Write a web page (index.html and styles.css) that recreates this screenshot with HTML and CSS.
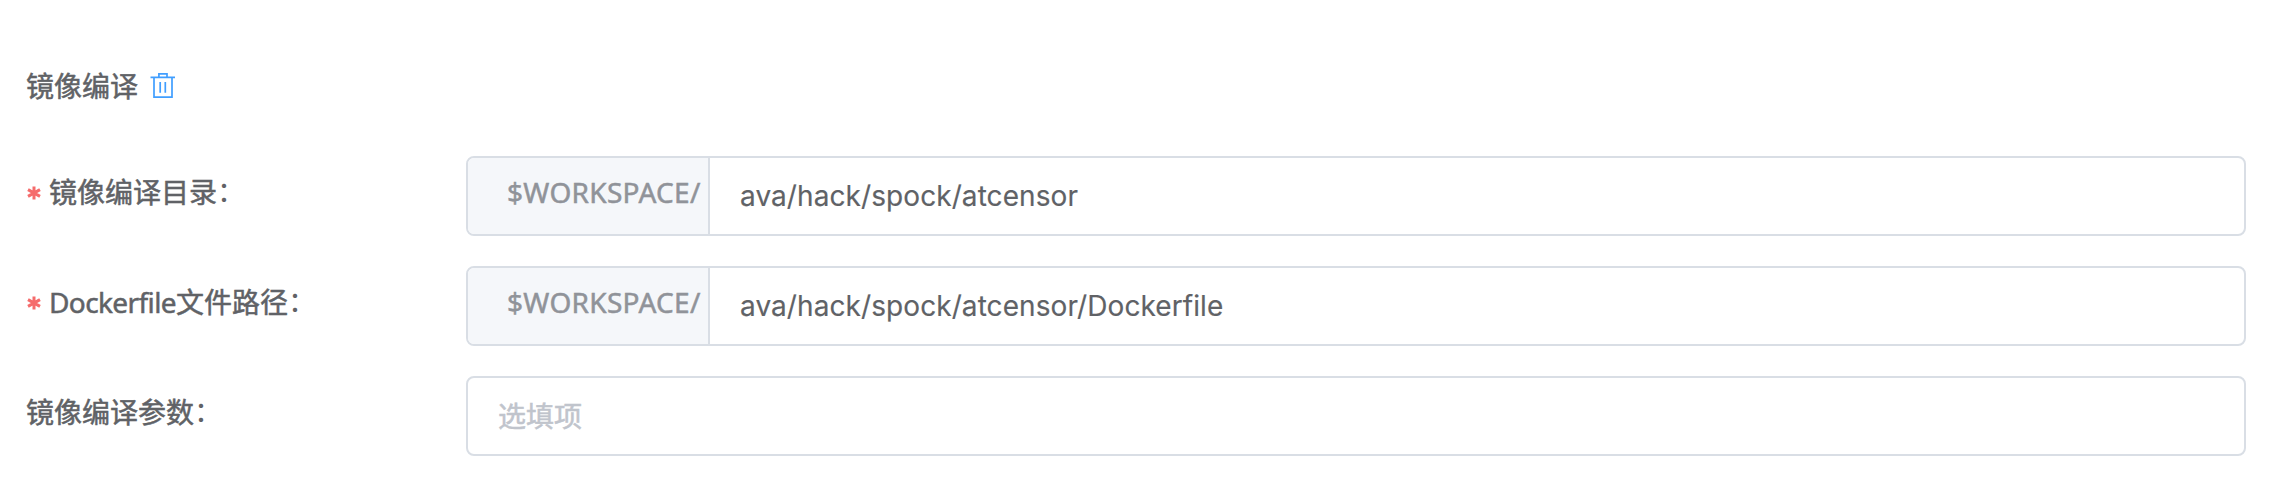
FILE: index.html
```html
<!DOCTYPE html>
<html lang="zh-CN">
<head>
<meta charset="utf-8">
<title>镜像编译</title>
<link rel="stylesheet" href="styles.css">
</head>
<body>
<main class="form">
  <header class="form-header">
    <span>镜像编译</span>
    <svg class="trash" width="26" height="26" viewBox="0 0 26 26" fill="none" stroke="#409eff" aria-hidden="true">
      <path stroke-width="1.7" d="M.5 4.3H25M8.9 4V.9H17V4M4 4.5V24.2H22V4.5M10.2 9V19.8M15.3 9V19.8"/>
    </svg>
  </header>
  <div class="row">
    <label class="label"><svg class="star" width="14" height="14" viewBox="0 0 14 14" stroke="#f56c6c" stroke-width="3" aria-hidden="true"><path d="M7 .4V13.6M1 3.6L13 10.4M13 3.6L1 10.4"/></svg><span>镜像编译目录<span class="colon">：</span></span></label>
    <div class="field"><span class="prefix"><span class="prefix-text">$WORKSPACE/</span></span><span class="value">ava/hack/spock/atcensor</span></div>
  </div>
  <div class="row">
    <label class="label"><svg class="star" width="14" height="14" viewBox="0 0 14 14" stroke="#f56c6c" stroke-width="3" aria-hidden="true"><path d="M7 .4V13.6M1 3.6L13 10.4M13 3.6L1 10.4"/></svg><span><span class="latin">Dockerfile</span>文件路径<span class="colon">：</span></span></label>
    <div class="field"><span class="prefix"><span class="prefix-text">$WORKSPACE/</span></span><span class="value">ava/hack/spock/atcensor/Dockerfile</span></div>
  </div>
  <div class="row">
    <label class="label"><span>镜像编译参数<span class="colon">：</span></span></label>
    <div class="field"><span class="placeholder">选填项</span></div>
  </div>
</main>
</body>
</html>
```
FILE: styles.css
```css
* { box-sizing: border-box; }
body {
  margin: 0;
  background: #fff;
  color: #606266;
  font: 400 28px/40px "Noto Sans CJK SC", sans-serif;
  -webkit-text-stroke: 0.5px currentColor;
}
.form { padding: 65px 40px 0 26px; }
.form-header {
  display: flex;
  gap: 12px;
  height: 91px;
}
.trash { margin-top: 8px; }
.row {
  display: flex;
  height: 80px;
  margin-bottom: 30px;
}
.label {
  display: flex;
  width: 440px;
  padding-top: 15px;
  white-space: nowrap;
}
.star { margin: 15px 8px 0 1px; }
.colon {
  position: relative;
  top: -1px;
  -webkit-text-stroke-width: 0;
}
.latin {
  font-family: "Noto Sans", sans-serif;
  letter-spacing: -0.6px;
}
.field {
  display: flex;
  flex: 1;
  border: 2px solid #d9dee5;
  border-radius: 8px;
  overflow: hidden;
  white-space: nowrap;
}
.prefix {
  width: 242px;
  padding: 13px 0 0 39px;
  background: #f5f7fa;
  border-right: 2px solid #d9dee5;
  color: #909399;
}
.prefix-text {
  font-family: "Noto Sans", sans-serif;
  letter-spacing: 0.3px;
}
.value {
  padding: 18px 30px 0;
  font-family: Inter, sans-serif;
  letter-spacing: 0.08px;
  -webkit-text-stroke-width: 0.15px;
}
.placeholder {
  padding: 17px 30px 0;
  color: #c0c4cc;
}
```
